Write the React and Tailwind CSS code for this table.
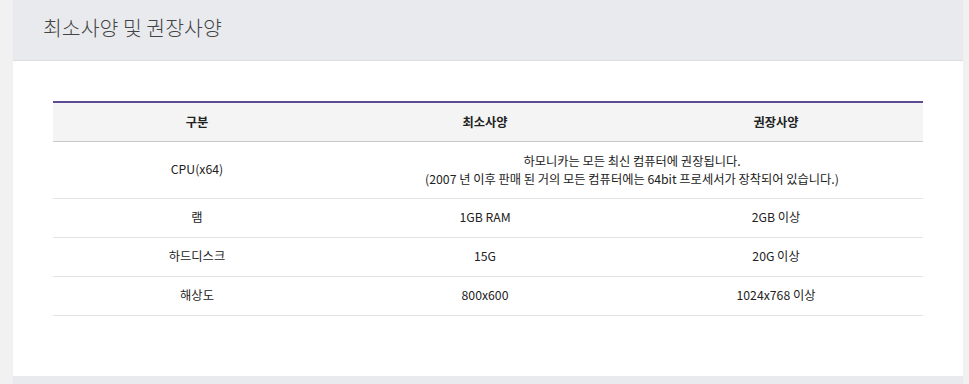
const rows = [
  { name: 'CPU(x64)', note: ['하모니카는 모든 최신 컴퓨터에 권장됩니다.', '(2007 년 이후 판매 된 거의 모든 컴퓨터에는 64bit 프로세서가 장착되어 있습니다.)'] },
  { name: '램', min: '1GB RAM', rec: '2GB 이상' },
  { name: '하드디스크', min: '15G', rec: '20G 이상' },
  { name: '해상도', min: '800x600', rec: '1024x768 이상' },
]

export default function App() {
  return (
    <div className="h-[384px] w-[969px] overflow-hidden bg-[#f1f1f1] pl-[13px] pr-[6px] font-['Noto_Sans_CJK_KR','Noto_Sans',sans-serif]">
      <div className="flex h-[61px] items-center border-b border-[#dcdde1] bg-[#e9eaed] pl-[30px]">
        <h1 className="-mt-[6px] text-[20.5px] font-light leading-none text-[#444]">최소사양 및 권장사양</h1>
      </div>
      <div className="h-[315px] bg-white px-[40px] pt-[40px]">
        <table className="w-[870px] table-fixed border-collapse border-t-2 border-[#5d4b93] text-[12.25px] text-[#222]">
          <colgroup>
            <col className="w-[288px]" />
            <col className="w-[288px]" />
            <col />
          </colgroup>
          <thead>
            <tr className="h-[39px] border-b border-[#cacaca] bg-[#f4f4f4]">
              <th className="font-bold">구분</th>
              <th className="font-bold">최소사양</th>
              <th className="font-bold">권장사양</th>
            </tr>
          </thead>
          <tbody>
            {rows.map(r => (
              <tr key={r.name} className={`${r.note ? 'h-[57px]' : 'h-[39px]'} border-b border-[#e3e3e3]`}>
                <td className="text-center">{r.name}</td>
                {r.note ? (
                  <td colSpan={2} className="text-center leading-[18px]">
                    {r.note[0]}<br />{r.note[1]}
                  </td>
                ) : (
                  <>
                    <td className="text-center">{r.min}</td>
                    <td className="text-center">{r.rec}</td>
                  </>
                )}
              </tr>
            ))}
          </tbody>
        </table>
      </div>
      <div className="h-[8px] bg-[#e9eaed]" />
    </div>
  )
}
